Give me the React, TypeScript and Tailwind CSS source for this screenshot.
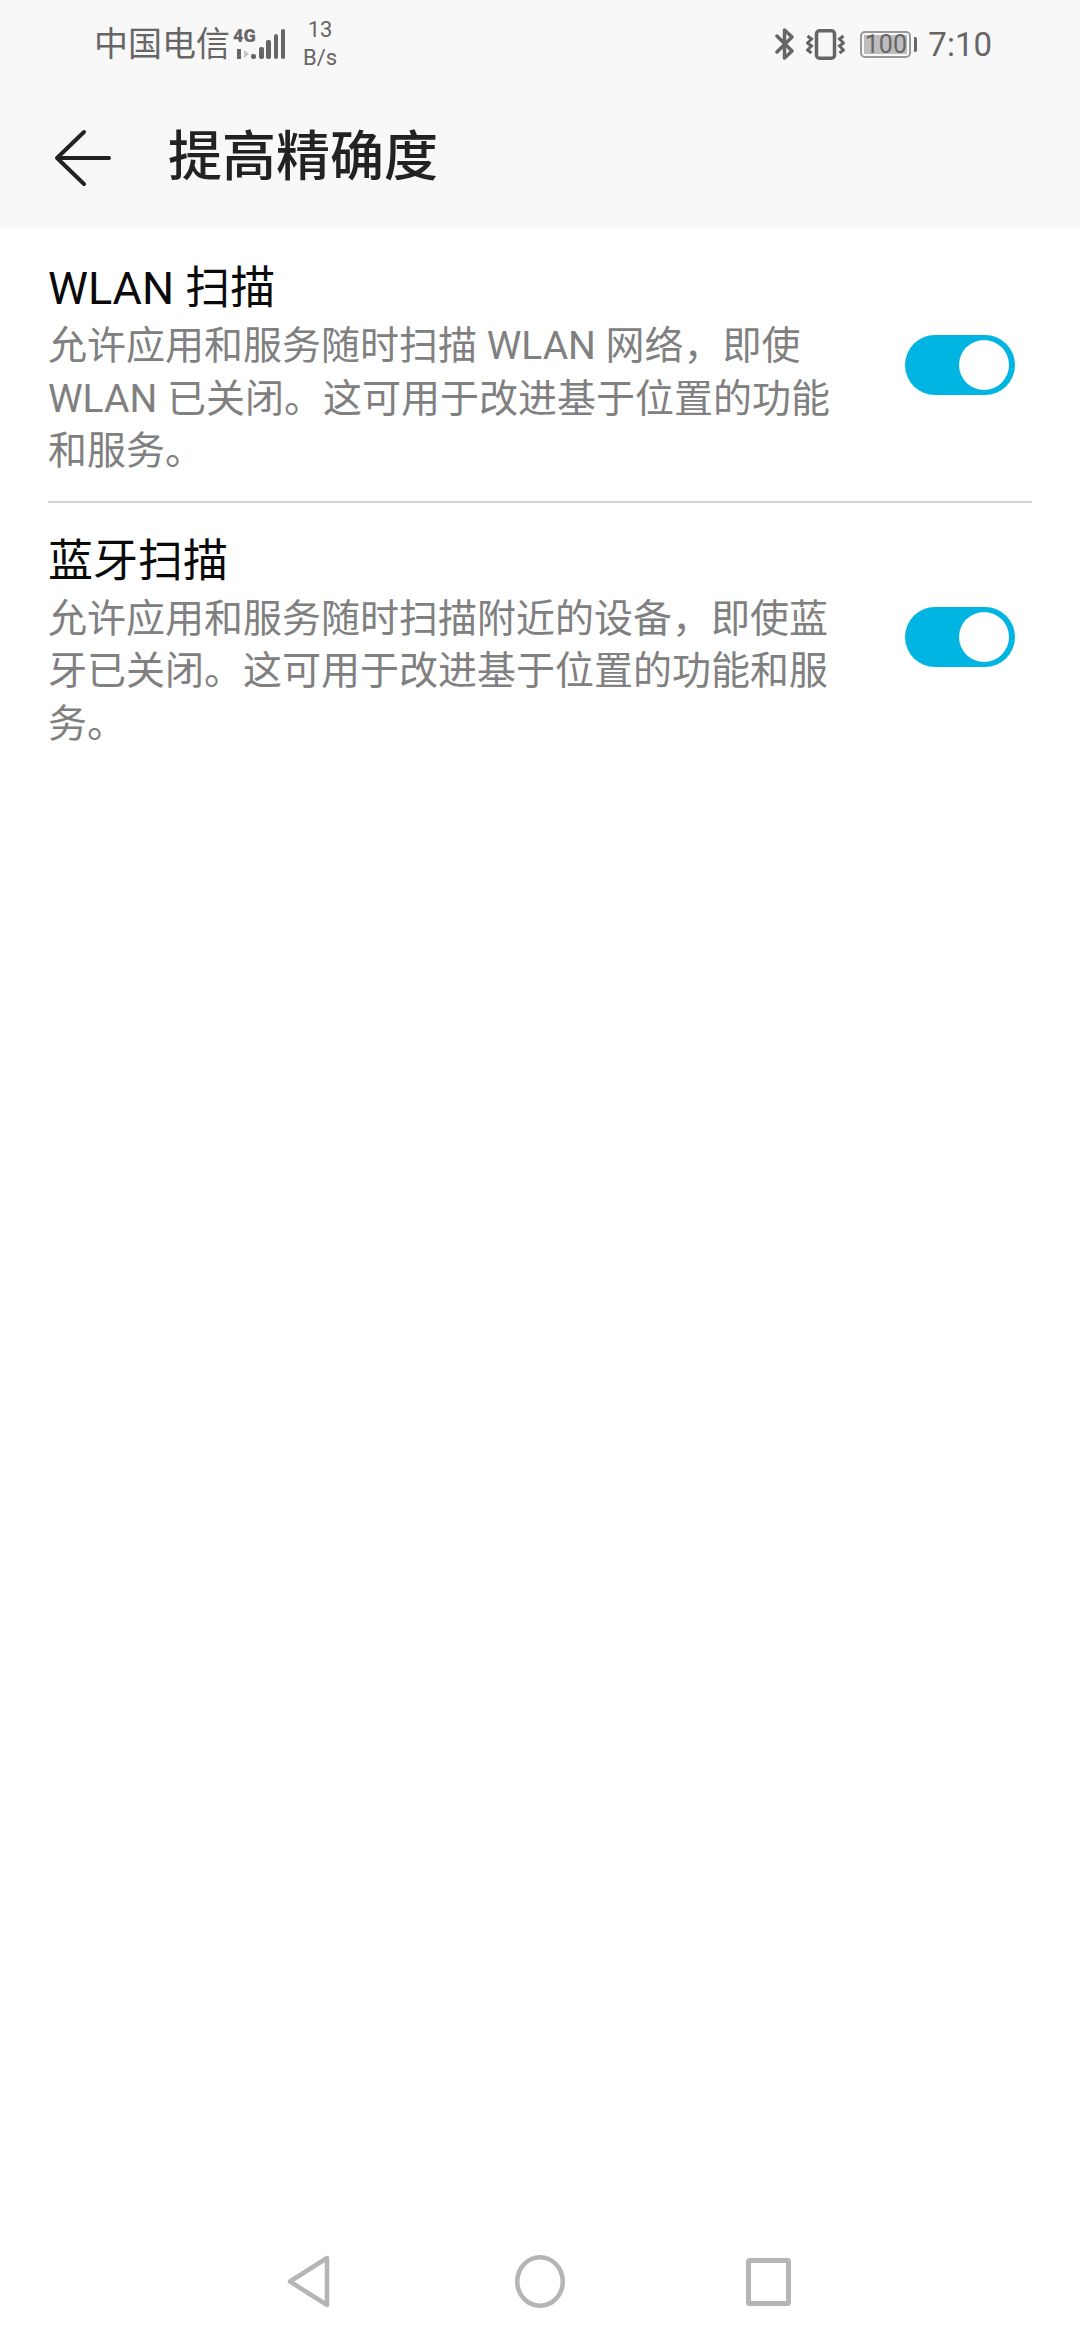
const FONT = "font-['Roboto','Noto_Sans_CJK_SC',sans-serif]";

function Toggle() {
  return (
    <div className="-mt-[10px] flex h-[60px] w-[110px] shrink-0 items-center justify-end rounded-full bg-[#00b5e2] pr-[6px]">
      <div className="h-[50px] w-[50px] rounded-full bg-white" />
    </div>
  );
}

function Row({ title, desc }: { title: string; desc: string[] }) {
  return (
    <div className="flex items-center justify-between pb-[23px] pr-[17px] pt-[34px]">
      <div className="w-[800px]">
        <div className="h-[54px] text-[45px] leading-[54px] text-[#0a0a0a]">{title}</div>
        <div className="mt-[4px] text-[39px] leading-[52.5px] text-[#808080]">
          {desc.map((l) => (
            <div key={l} className="whitespace-nowrap">{l}</div>
          ))}
        </div>
      </div>
      <Toggle />
    </div>
  );
}

export default function App() {
  return (
    <div className={`flex h-[2340px] w-[1080px] flex-col bg-white ${FONT}`}>
      <div className="h-[228px] bg-[#f8f8f8]">
        <div className="flex h-[88px] items-center justify-between pl-[94px] pr-[88px] text-[#666666]">
          <div className="flex items-center">
            <span className="text-[34px] leading-none">中国电信</span>
            <svg width="54" height="40" viewBox="0 -6 54 40" className="ml-[2px] -mt-[6px]" fill="#666666">
              <text x="1" y="15" fontSize="18" fontWeight="900" fontFamily="Roboto">4G</text>
              <rect x="5" y="22" width="4" height="10" />
              <path d="M12 23l5 4-5 4z" fill="#c4c4c4" />
              <rect x="19" y="27" width="5" height="5" rx="2" />
              <rect x="27" y="20" width="5" height="12" rx="2" />
              <rect x="34" y="13" width="5" height="19" rx="2" />
              <rect x="42" y="7" width="4" height="25" rx="2" />
              <rect x="49" y="2" width="4" height="30" rx="2" />
            </svg>
            <div className="ml-[17px] flex w-[34px] flex-col items-center text-[22px] leading-[28px]">
              <span>13</span>
              <span>B/s</span>
            </div>
          </div>
          <div className="flex items-center">
            <svg width="19" height="32" viewBox="0 0 19 32" fill="none" stroke="#666666" strokeWidth="3.5" strokeLinejoin="round" strokeLinecap="round">
              <path d="M2 8L17 23 9.5 30V2L17 9 2 24" />
            </svg>
            <svg width="39" height="31" viewBox="0 0 39 31" className="ml-[12px]" fill="none" stroke="#666666" strokeWidth="3.5">
              <rect x="10.5" y="1.75" width="18" height="27.5" rx="3" />
              <path d="M1.5 7l4 3-4 4 4 3-4 4 4 3M37.5 7l-4 3 4 4-4 3 4 4-4 3" strokeWidth="3" />
            </svg>
            <div className="relative ml-[15px] flex h-[27px] w-[51px] items-center justify-center rounded-[5px] border-2 border-[#999999] text-[25px] leading-none">
              <div className="absolute inset-[2px] bg-[#bdbdbd]" />
              <span className="relative">100</span>
            </div>
            <div className="ml-[3px] h-[15px] w-[3px] rounded-r-[2px] bg-[#666666]" />
            <span className="ml-[11px] text-[33px] leading-none">7:10</span>
          </div>
        </div>
        <div className="flex h-[140px] items-center">
          <svg width="60" height="60" viewBox="0 0 60 60" fill="none" stroke="#222222" strokeWidth="4" strokeLinecap="round" strokeLinejoin="round" className="ml-[53px]">
            <path d="M31 4L4 30l27 26M4 30h52" />
          </svg>
          <span className="ml-[55px] text-[54px] font-medium leading-none text-[#222222]">提高精确度</span>
        </div>
      </div>

      <div className="px-[48px]">
        <Row title="WLAN 扫描" desc={["允许应用和服务随时扫描 WLAN 网络，即使", "WLAN 已关闭。这可用于改进基于位置的功能", "和服务。"]} />
        <div className="-mb-[2px] h-[2px] bg-[#d4d4d4]" />
        <Row title="蓝牙扫描" desc={["允许应用和服务随时扫描附近的设备，即使蓝", "牙已关闭。这可用于改进基于位置的功能和服", "务。"]} />
      </div>

      <div className="mt-auto flex h-[120px] items-start pl-[287px] pt-[35px]">
        <svg width="43" height="53" viewBox="0 0 43 53" fill="none" stroke="#b5b5b5" strokeWidth="4.5" strokeLinejoin="round">
          <path d="M3 26.5L40 3v47z" />
        </svg>
        <svg width="50" height="53" viewBox="0 0 50 53" fill="none" stroke="#b5b5b5" strokeWidth="4.5" className="ml-[185px]">
          <ellipse cx="25" cy="26.5" rx="22.75" ry="24.25" />
        </svg>
        <svg width="45" height="48" viewBox="0 0 45 48" fill="none" stroke="#b5b5b5" strokeWidth="5" strokeLinejoin="round" className="ml-[181px] mt-[3px]">
          <rect x="2.5" y="2.5" width="40" height="43" rx="1" />
        </svg>
      </div>
    </div>
  );
}
